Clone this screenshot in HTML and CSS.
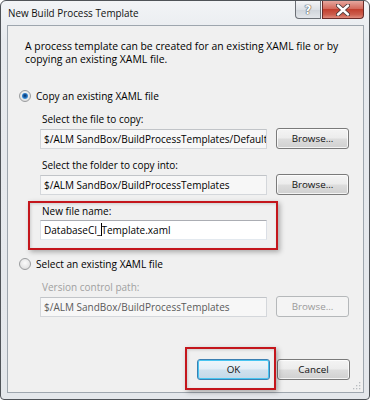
FILE: index.html
```html
<!DOCTYPE html>
<html>
<head>
<meta charset="utf-8">
<link rel="stylesheet" href="styles.css">
</head>
<body>
<div class="window">
  <div class="titlebar">
    <span class="title">New Build Process Template</span>
    <div class="controls">
      <div class="ctl help"><span>?</span></div>
      <div class="ctl close">
        <svg width="14" height="12" viewBox="0 0 14 12"><path d="M2 1.5 L12 10.5 M12 1.5 L2 10.5" stroke="#4a3a3a" stroke-width="4.2" stroke-linecap="round"/><path d="M2 1.5 L12 10.5 M12 1.5 L2 10.5" stroke="#fff" stroke-width="2.4" stroke-linecap="round"/></svg>
      </div>
    </div>
  </div>
  <div class="client">
    <p class="intro">A process template can be created for an existing XAML file or by copying an existing XAML file.</p>

    <div class="radio-row first">
      <span class="radio checked"></span><span>Copy an existing XAML file</span>
    </div>
    <div class="sub">
      <div class="label">Select the file to copy:</div>
      <div class="row">
        <div class="textbox readonly"><span class="clip">$/ALM SandBox/BuildProcessTemplates/DefaultTemplate.xaml</span></div>
        <div class="button">Browse...</div>
      </div>
      <div class="label">Select the folder to copy into:</div>
      <div class="row">
        <div class="textbox readonly">$/ALM SandBox/BuildProcessTemplates</div>
        <div class="button">Browse...</div>
      </div>
      <div class="group highlight-name">
        <div class="label">New file name:</div>
        <div class="row">
          <div class="textbox editable">DatabaseCI_<span class="caret"></span>Template.xaml</div>
        </div>
      </div>
    </div>

    <div class="radio-row second">
      <span class="radio"></span><span>Select an existing XAML file</span>
    </div>
    <div class="sub disabled">
      <div class="label">Version control path:</div>
      <div class="row">
        <div class="textbox readonly">$/ALM SandBox/BuildProcessTemplates</div>
        <div class="button off">Browse...</div>
      </div>
    </div>

    <div class="actions">
      <div class="ok-wrap"><div class="button focused">OK</div></div>
      <div class="button">Cancel</div>
    </div>
    <svg class="grip" width="8" height="8" viewBox="0 0 8 8">
      <rect x="6" y="0" width="1.3" height="1.3" fill="#b8bcc0"/>
      <rect x="3" y="3" width="1.3" height="1.3" fill="#b8bcc0"/>
      <rect x="6" y="3" width="1.3" height="1.3" fill="#b8bcc0"/>
      <rect x="0" y="6" width="1.3" height="1.3" fill="#b8bcc0"/>
      <rect x="3" y="6" width="1.3" height="1.3" fill="#b8bcc0"/>
      <rect x="6" y="6" width="1.3" height="1.3" fill="#b8bcc0"/>
    </svg>
  </div>
</div>
</body>
</html>
```

FILE: styles.css
```css
* { box-sizing: border-box; }
html, body { margin: 0; padding: 0; background: #fff; }
body {
  font-family: "Open Sans", "Noto Sans", sans-serif;
  font-size: 10px;
  color: #000;
}
.window {
  width: 370px;
  height: 400px;
  border: 1px solid #4f5358;
  border-radius: 6px 6px 4px 4px;
  background: linear-gradient(#f2f4f6, #e7eaee 40px, #e4e7eb);
  display: flex;
  flex-direction: column;
  padding: 0 5px 6px 6px;
  overflow: hidden;
}
.titlebar {
  height: 24px;
  display: flex;
  justify-content: space-between;
  align-items: flex-start;
}
.title {
  font-size: 9.9px;
  color: #111;
  margin-top: 5px;
  margin-left: 1px;
}
.controls {
  display: flex;
  gap: 1px;
}
.ctl {
  height: 18px;
  border: 1px solid #6b6f75;
  border-top: none;
  display: flex;
  align-items: center;
  justify-content: center;
}
.help {
  width: 26px;
  border-radius: 0 0 0 4px;
  background: linear-gradient(#f4f5f7, #dde1e6 50%, #cfd4da 51%, #e3e6ea);
}
.help span {
  font-family: "DejaVu Sans", sans-serif;
  font-size: 12px;
  font-weight: bold;
  color: #fff;
  text-shadow: 0 0 1px #555, 0 0 1px #555, 0 0 1px #555;
}
.close {
  width: 42px;
  border-radius: 0 0 4px 0;
  border-color: #6a2b28;
  background: linear-gradient(#e6a79e, #d46a5c 45%, #c2402f 50%, #cc5d4c 80%, #e08c7e);
}
.client {
  flex: 1;
  position: relative;
  border: 1px solid #9ea6ae;
  background: #f0f0f0;
  display: flex;
  flex-direction: column;
  padding: 14px 13px 12px 11px;
}
.intro {
  margin: 0 -8px 0 6px;
  line-height: 13px;
  font-size: 10.4px;
}
.radio-row {
  display: flex;
  align-items: center;
  height: 14px;
  gap: 5px;
  font-size: 10.1px;
}
.radio-row.first { margin-top: 23px; }
.radio-row.second { margin-top: 17px; }
.radio {
  width: 12px;
  height: 12px;
  border-radius: 50%;
  border: 1px solid #9a9c9e;
  background: radial-gradient(circle at 50% 40%, #fbfbfb 0, #e6e6e6 60%, #d3d3d3 100%);
  position: relative;
}
.radio.checked::after {
  content: "";
  position: absolute;
  left: 2px;
  top: 2px;
  width: 6px;
  height: 6px;
  border-radius: 50%;
  background: radial-gradient(circle at 50% 45%, #0c2e5c 0, #1a5ea8 35%, #48a0e6 75%, #9dd0f5 100%);
}
.sub {
  margin-left: 21px;
  margin-top: 9px;
  display: flex;
  flex-direction: column;
  align-items: flex-start;
}
.label {
  line-height: 14px;
  height: 14px;
  margin: 0 0 2px 2px;
  font-size: 10px;
}
.row {
  display: flex;
  gap: 9px;
  align-items: center;
  margin-bottom: 9px;
}
.textbox {
  width: 227px;
  height: 20px;
  line-height: 18px;
  padding: 0 3px;
  white-space: nowrap;
  overflow: hidden;
  border: 1px solid #d4d7db;
  border-top-color: #c1c4c8;
  font-size: 10px;
}
.clip {
  display: block;
  width: 222px;
  overflow: hidden;
}
.textbox.readonly { background: #f7f7f7; }
.textbox.editable {
  background: #fff;
  border-color: #dbdfe6 #dbdfe6 #e3e9ef;
  border-top-color: #abadb3;
}
.caret {
  display: inline-block;
  width: 1px;
  height: 13px;
  background: #000;
  vertical-align: -2px;
  margin-right: -1px;
}
.button {
  width: 73px;
  height: 21px;
  border: 1px solid #7a7a7a;
  border-radius: 3px;
  background: linear-gradient(#f4f4f4, #ececec 48%, #dddddd 52%, #d0d0d0);
  box-shadow: inset 0 0 0 1px rgba(255,255,255,0.75);
  display: flex;
  align-items: center;
  justify-content: center;
  font-size: 9.8px;
  color: #111;
}
.button.off {
  border-color: #b5b8ba;
  background: #f4f4f4;
  color: #9a9a9a;
  box-shadow: none;
}
.disabled .textbox { color: #5a5a5a; }
.disabled .label { color: #a0a0a0; }
.group { position: relative; }
.group .row { margin-bottom: 0; }
.highlight-name::before {
  content: "";
  position: absolute;
  top: -3px;
  left: -12px;
  right: -11px;
  bottom: -10px;
  border: 2px solid #c4161c;
  box-shadow: 2px 2px 5px rgba(0,0,0,0.3), inset 1px 1px 3px rgba(0,0,0,0.15);
  pointer-events: none;
}
.actions {
  margin-top: auto;
  display: flex;
  justify-content: flex-end;
  gap: 7px;
}
.ok-wrap { position: relative; }
.ok-wrap::before {
  content: "";
  position: absolute;
  top: -12px;
  left: -12px;
  right: -6px;
  bottom: -10px;
  border: 2px solid #c4161c;
  box-shadow: 2px 2px 5px rgba(0,0,0,0.3), inset 1px 1px 3px rgba(0,0,0,0.15);
}
.button.focused {
  border-color: #3c7fb1;
  background: linear-gradient(#eef6fb, #e3eef6 48%, #cfe1ee 52%, #c4d8e8);
  box-shadow: inset 0 0 0 1px #48c5f1;
}
.grip {
  position: absolute;
  right: 2px;
  bottom: 2px;
}
```
